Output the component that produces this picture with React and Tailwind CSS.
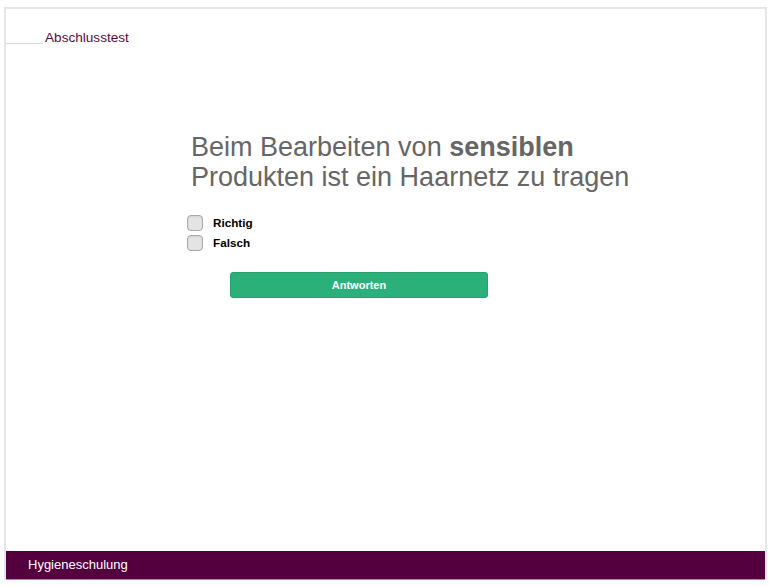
import React, { useState } from "react";

const options = ["Richtig", "Falsch"];

const App = () => {
  const [checked, setChecked] = useState({});

  const toggle = (opt) => {
    setChecked((prev) => ({ ...prev, [opt]: !prev[opt] }));
  };

  return (
    <div
      className="w-[772px] h-[587px] bg-white pl-[4px] pt-[7px]"
      style={{ fontFamily: '"Liberation Sans", Arial, sans-serif' }}
    >
      <div className="w-[763px] h-[573px] border-t-2 border-l-2 border-r-2 border-[#e6e6e6] flex flex-col">
        {/* header */}
        <div className="flex items-end h-[36px]">
          <div className="w-[37px] h-px bg-[#dcdcdc] mb-[1px]" />
          <span className="ml-[2px] text-[13.6px] leading-none text-[#5a0a3c]">
            Abschlusstest
          </span>
        </div>

        {/* question */}
        <div className="flex-1 pl-[185px] pt-[87px]">
          <h1 className="text-[27px] leading-[30px] text-[#666666]">
            Beim Bearbeiten von <b>sensiblen</b>
            <br />
            Produkten ist ein Haarnetz zu tragen
          </h1>

          <div className="mt-[23px] ml-[-4px] flex flex-col gap-[4px]">
            {options.map((opt) => (
              <label key={opt} className="flex items-center gap-[10px] cursor-pointer">
                <span
                  onClick={() => toggle(opt)}
                  className="w-[16px] h-[16px] rounded-[4px] border border-[#a9a9a9] bg-[#e4e4e4] shadow-[inset_0_1px_2px_rgba(0,0,0,0.08)] flex items-center justify-center text-[11px] text-[#333]"
                >
                  {checked[opt] ? "✓" : ""}
                </span>
                <span className="text-[11.7px] font-bold text-black leading-none">{opt}</span>
              </label>
            ))}
          </div>

          <button className="mt-[21px] ml-[39px] w-[258px] h-[26px] rounded-[3px] bg-[#2bb07a] border border-[#27a070] text-white text-[11px] font-bold">
            Antworten
          </button>
        </div>

        {/* footer */}
        <div className="h-[29px] bg-[#54003f] border-b border-[#7aa0c0] flex items-center pl-[22px]">
          <span className="text-[13px] text-white">Hygieneschulung</span>
        </div>
      </div>
    </div>
  );
};

export default App;
